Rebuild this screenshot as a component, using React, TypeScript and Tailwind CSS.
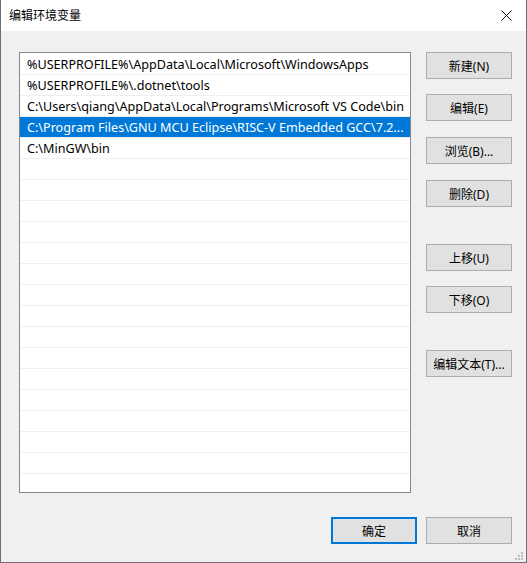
import React from "react";

const paths = [
  "%USERPROFILE%\\AppData\\Local\\Microsoft\\WindowsApps",
  "%USERPROFILE%\\.dotnet\\tools",
  "C:\\Users\\qiang\\AppData\\Local\\Programs\\Microsoft VS Code\\bin",
  "C:\\Program Files\\GNU MCU Eclipse\\RISC-V Embedded GCC\\7.2...",
  "C:\\MinGW\\bin",
];

const selected = 3;
const rowCount = 21;

const font = { fontFamily: '"Noto Sans", "Noto Sans CJK SC", sans-serif' };

function Btn({ label, className = "", primary = false }: { label: string; className?: string; primary?: boolean }) {
  return (
    <button
      className={`w-[86px] h-[27px] flex items-center justify-center pt-[2px] bg-[#e1e1e1] text-[12px] text-black leading-none ${
        primary ? "border-2 border-[#0078d7]" : "border border-[#adadad]"
      } ${className}`}
    >
      {label}
    </button>
  );
}

export default function App() {
  return (
    <div
      className="w-[527px] h-[563px] flex flex-col border-x border-b border-[#717171] bg-[#f0f0f0] select-none"
      style={font}
    >
      {/* title bar */}
      <div className="h-[31px] bg-white flex items-center justify-between pl-[8px] pr-[10px] shrink-0">
        <span className="text-[12px] text-black">编辑环境变量</span>
        <svg width="11" height="11" viewBox="0 0 11 11" className="mr-[4px]">
          <path d="M0.5 0.5 L10.5 10.5 M10.5 0.5 L0.5 10.5" stroke="#111" strokeWidth="1" />
        </svg>
      </div>

      <div className="relative flex-1 flex flex-col pt-[21px] pl-[18px] pr-[14px]">
        <div className="flex">
          {/* path list */}
          <div className="w-[392px] h-[441px] border border-[#828790] bg-white pt-[1px] overflow-hidden">
            {Array.from({ length: rowCount }).map((_, i) => {
              const text = paths[i];
              const isSel = i === selected;
              return (
                <div
                  key={i}
                  className={`h-[21px] border-b border-[#efefef] flex items-center pt-[2px] pl-[7px] pr-[1px] text-[12.6px] whitespace-nowrap overflow-hidden ${
                    isSel ? "bg-[#0078d7] text-white" : "text-black"
                  }`}
                >
                  {text ?? ""}
                </div>
              );
            })}
          </div>

          {/* side buttons */}
          <div className="ml-[15px] flex flex-col">
            <Btn label="新建(N)" />
            <Btn label="编辑(E)" className="mt-[15px]" />
            <Btn label="浏览(B)..." className="mt-[16px]" />
            <Btn label="删除(D)" className="mt-[16px]" />
            <Btn label="上移(U)" className="mt-[37px]" />
            <Btn label="下移(O)" className="mt-[15px]" />
            <Btn label="编辑文本(T)..." className="mt-[37px]" />
          </div>
        </div>

        {/* dialog buttons */}
        <div className="mt-[24px] flex justify-end gap-[9px]">
          <Btn label="确定" primary />
          <Btn label="取消" />
        </div>

        {/* resize grip */}
        <svg width="8" height="8" viewBox="0 0 8 8" className="absolute right-[3px] bottom-[2px]">
          <rect x="6" y="0" width="2" height="2" fill="#bdbdbd" />
          <rect x="3" y="3" width="2" height="2" fill="#bdbdbd" />
          <rect x="6" y="3" width="2" height="2" fill="#bdbdbd" />
          <rect x="0" y="6" width="2" height="2" fill="#bdbdbd" />
          <rect x="3" y="6" width="2" height="2" fill="#bdbdbd" />
          <rect x="6" y="6" width="2" height="2" fill="#bdbdbd" />
        </svg>
      </div>
    </div>
  );
}
